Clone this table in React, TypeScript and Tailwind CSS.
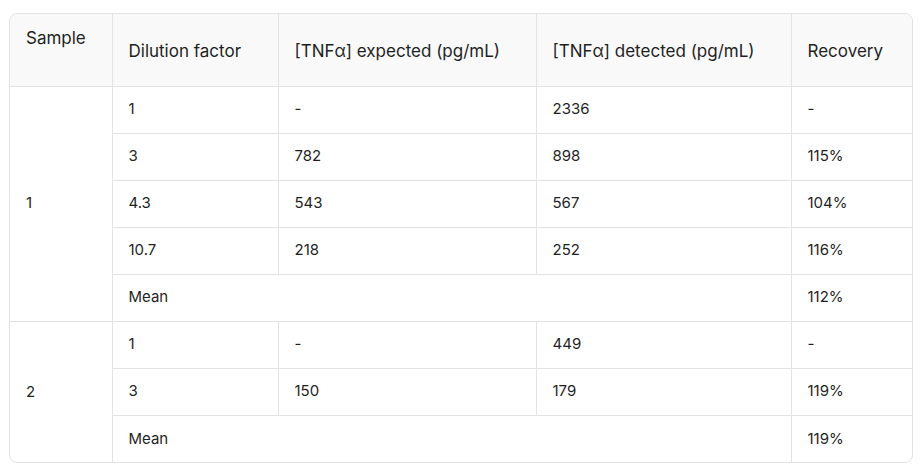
const headers = [
   "Dilution factor",
   "[TNFα] expected (pg/mL)",
   "[TNFα] detected (pg/mL)",
   "Recovery",
];

type Row = { dil: string; exp?: string; det?: string; rec: string; mean?: boolean };

const groups: { sample: string; rows: Row[] }[] = [
   {
      sample: "1",
      rows: [
         { dil: "1", exp: "-", det: "2336", rec: "-" },
         { dil: "3", exp: "782", det: "898", rec: "115%" },
         { dil: "4.3", exp: "543", det: "567", rec: "104%" },
         { dil: "10.7", exp: "218", det: "252", rec: "116%" },
         { dil: "Mean", rec: "112%", mean: true },
      ],
   },
   {
      sample: "2",
      rows: [
         { dil: "1", exp: "-", det: "449", rec: "-" },
         { dil: "3", exp: "150", det: "179", rec: "119%" },
         { dil: "Mean", rec: "119%", mean: true },
      ],
   },
];

const cell = "border border-[#e3e3e3] px-[16px] align-middle";

export default function App() {
   return (
      <div className="min-h-screen bg-white pt-[13px] pl-[9px] font-['Inter',sans-serif] text-[15px] text-[#1f1f1f]">
         <div className="w-[904px] overflow-hidden rounded-[8px] border border-[#e3e3e3]">
            <table className="w-full table-fixed border-collapse border-hidden text-left">
               <colgroup>
                  <col className="w-[102px]" />
                  <col className="w-[166px]" />
                  <col className="w-[258px]" />
                  <col className="w-[255px]" />
                  <col />
               </colgroup>
               <thead>
                  <tr className="h-[72px] bg-[#f9f9f9] text-[17px]">
                     <th className={`${cell} pt-[13px] align-top font-normal leading-[22px]`}>
                        Sample
                     </th>
                     {headers.map((h) => (
                        <th key={h} className={`${cell} pt-[4px] font-normal`}>
                           {h}
                        </th>
                     ))}
                  </tr>
               </thead>
               <tbody>
                  {groups.map((g) =>
                     g.rows.map((r, i) => (
                        <tr key={g.sample + i} className="h-[47px]">
                           {i === 0 && (
                              <td rowSpan={g.rows.length} className={cell}>
                                 {g.sample}
                              </td>
                           )}
                           {r.mean ? (
                              <td colSpan={3} className={cell}>
                                 {r.dil}
                              </td>
                           ) : (
                              <>
                                 <td className={cell}>{r.dil}</td>
                                 <td className={cell}>{r.exp}</td>
                                 <td className={cell}>{r.det}</td>
                              </>
                           )}
                           <td className={cell}>{r.rec}</td>
                        </tr>
                     ))
                  )}
               </tbody>
            </table>
         </div>
      </div>
   );
}
